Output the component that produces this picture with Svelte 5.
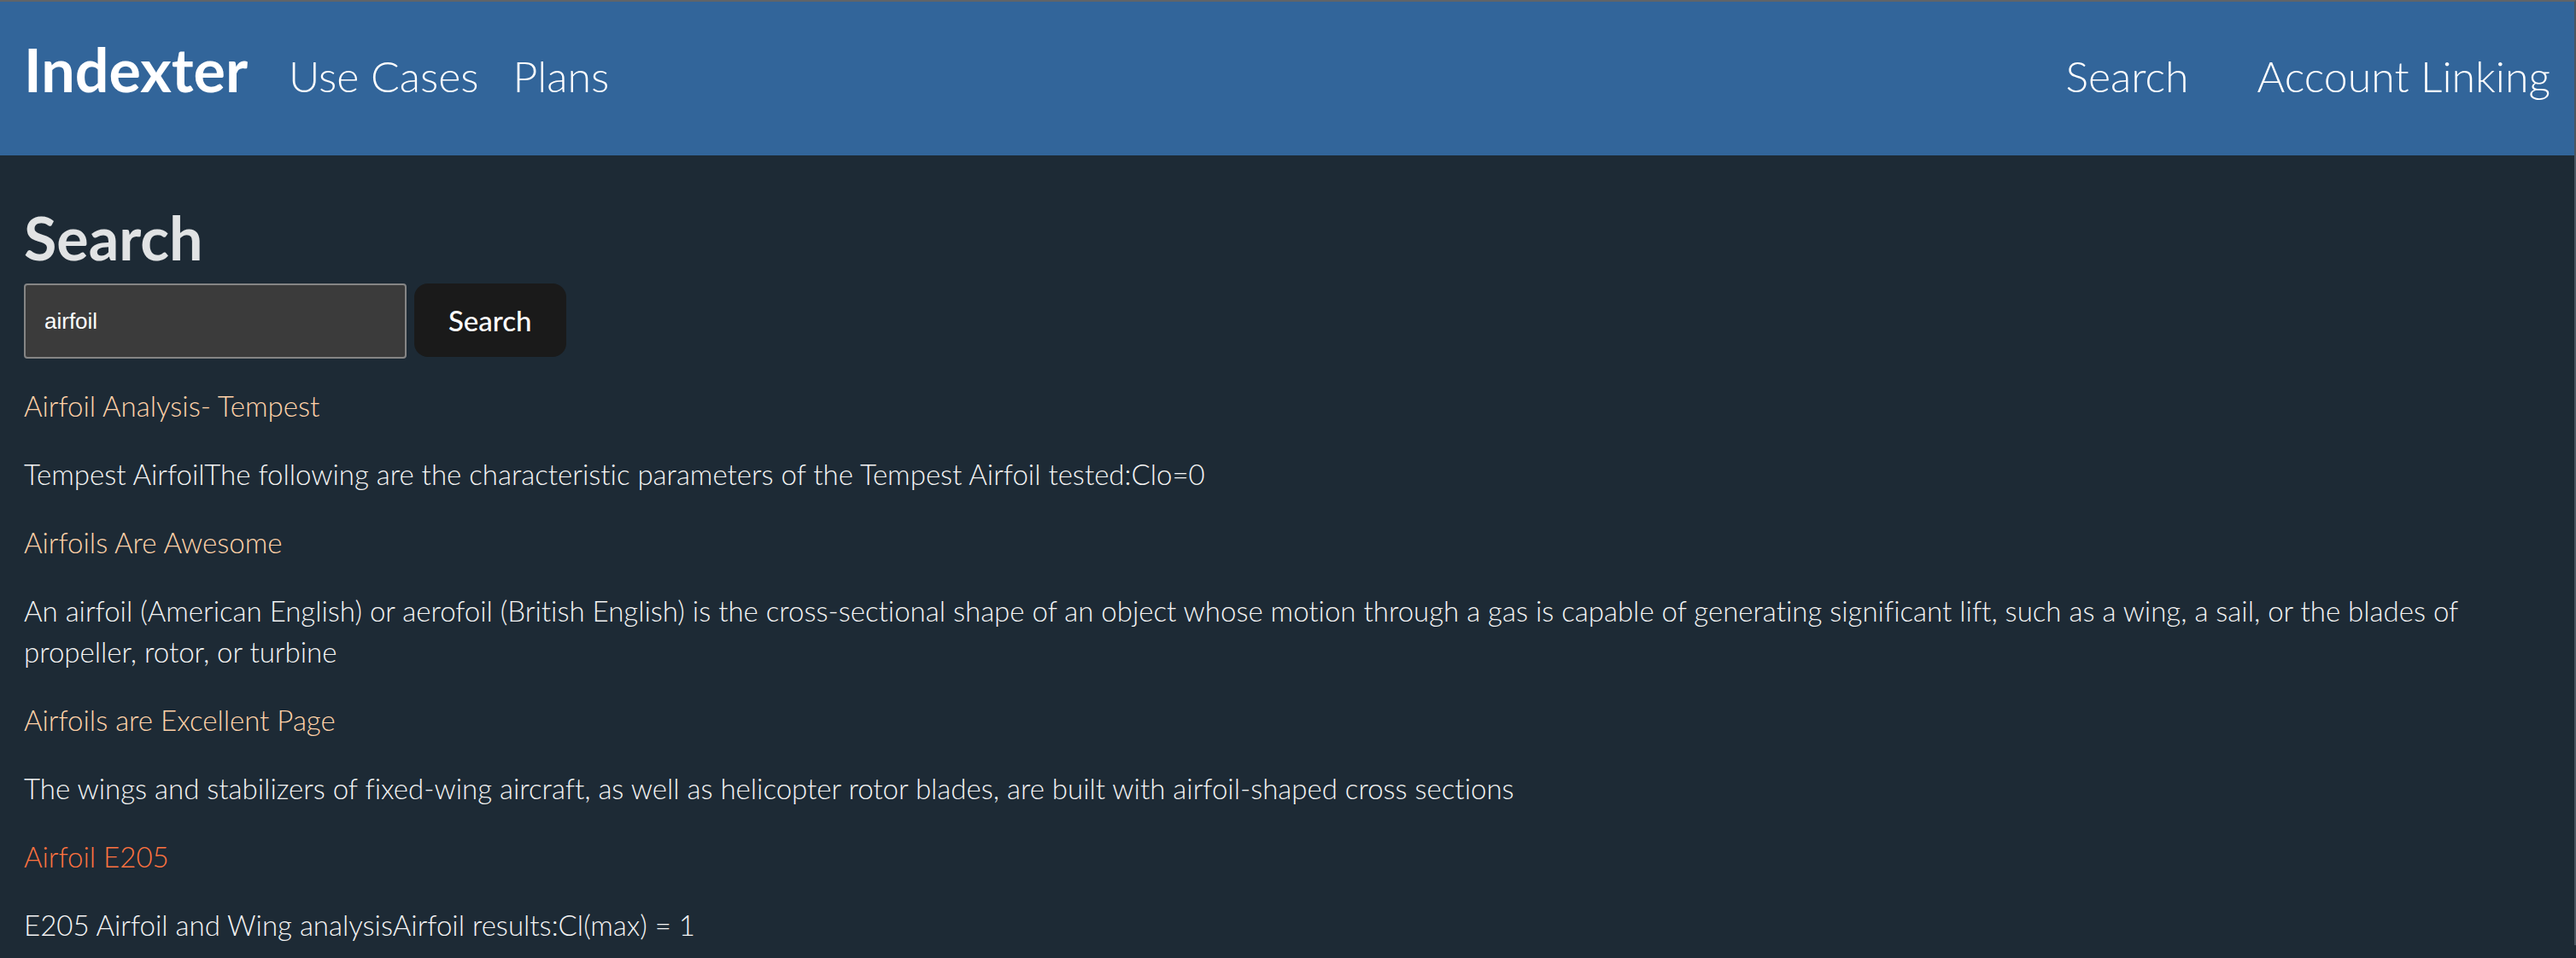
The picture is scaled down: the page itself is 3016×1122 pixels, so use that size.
<script>
  let query = $state('airfoil');

  const results = [
    {
      title: 'Airfoil Analysis- Tempest',
      text: 'Tempest AirfoilThe following are the characteristic parameters of the Tempest Airfoil tested:Clo=0'
    },
    {
      title: 'Airfoils Are Awesome',
      text: 'An airfoil (American English) or aerofoil (British English) is the cross-sectional shape of an object whose motion through a gas is capable of generating significant lift, such as a wing, a sail, or the blades of propeller, rotor, or turbine'
    },
    {
      title: 'Airfoils are Excellent Page',
      text: 'The wings and stabilizers of fixed-wing aircraft, as well as helicopter rotor blades, are built with airfoil-shaped cross sections'
    },
    {
      title: 'Airfoil E205',
      text: 'E205 Airfoil and Wing analysisAirfoil results:Cl(max) = 1',
      active: true
    }
  ];
</script>

<div class="page">
  <header>
    <nav aria-label="Main">
      <a class="brand" href="#home">Indexter</a>
      <a href="#use-cases">Use Cases</a>
      <a href="#plans">Plans</a>
    </nav>
    <nav class="account" aria-label="Account">
      <a href="#search">Search</a>
      <a href="#account-linking">Account Linking</a>
    </nav>
  </header>

  <main>
    <h1>Search</h1>
    <form onsubmit={(e) => e.preventDefault()}>
      <input type="text" aria-label="Search query" bind:value={query} />
      <button type="submit">Search</button>
    </form>

    {#each results as result}
      <article>
        <a class:active={result.active} href="#result">{result.title}</a>
        <p>{result.text}</p>
      </article>
    {/each}
  </main>
</div>

<style>
  :global(html) {
    background: #1d2a35;
  }

  :global(body) {
    margin: 0;
  }

  .page {
    border-top: 2px solid #606468;
    border-right: 2px solid #4b5661;
    background: #1d2a35;
    color: #f4f4f4;
    font-family: Lato, 'Open Sans', sans-serif;
    font-size: 33px;
    font-weight: 300;
    font-variant-ligatures: none;
    line-height: 48px;
  }

  a {
    color: inherit;
    text-decoration: none;
  }

  header {
    display: flex;
    align-items: baseline;
    justify-content: space-between;
    padding: 31px 28px 45px;
    background: #32659a;
    color: #fff;
    font-size: 50px;
    line-height: 96px;
  }

  nav {
    display: flex;
    align-items: baseline;
    gap: 40px;
  }

  .account {
    gap: 80px;
  }

  .brand {
    margin-right: 8px;
    font-size: 70px;
    font-weight: 700;
  }

  main {
    padding: 52px 28px 0;
  }

  h1 {
    margin: 0;
    color: #e1e3e4;
    font-size: 70px;
    font-weight: 700;
    line-height: 88px;
  }

  form {
    display: flex;
    align-items: flex-start;
    gap: 9px;
    margin: 10px 0 31px;
  }

  input {
    box-sizing: border-box;
    width: 448px;
    height: 88px;
    padding: 0 22px;
    border: 2px solid #858585;
    border-radius: 4px;
    background: #3b3b3b;
    color: #fff;
    font-family: 'Liberation Sans', Arial, sans-serif;
    font-size: 26px;
  }

  button {
    padding: 19px 40px;
    border: 0;
    border-radius: 16px;
    background: #1a1a1a;
    color: #fff;
    font: inherit;
    font-weight: 500;
  }

  article a {
    display: block;
    width: fit-content;
    color: #ffd2a8;
  }

  article a.active {
    color: #ff7340;
  }

  p {
    margin: 32px 0;
  }

  article:last-child p {
    margin-bottom: 0;
  }
</style>
